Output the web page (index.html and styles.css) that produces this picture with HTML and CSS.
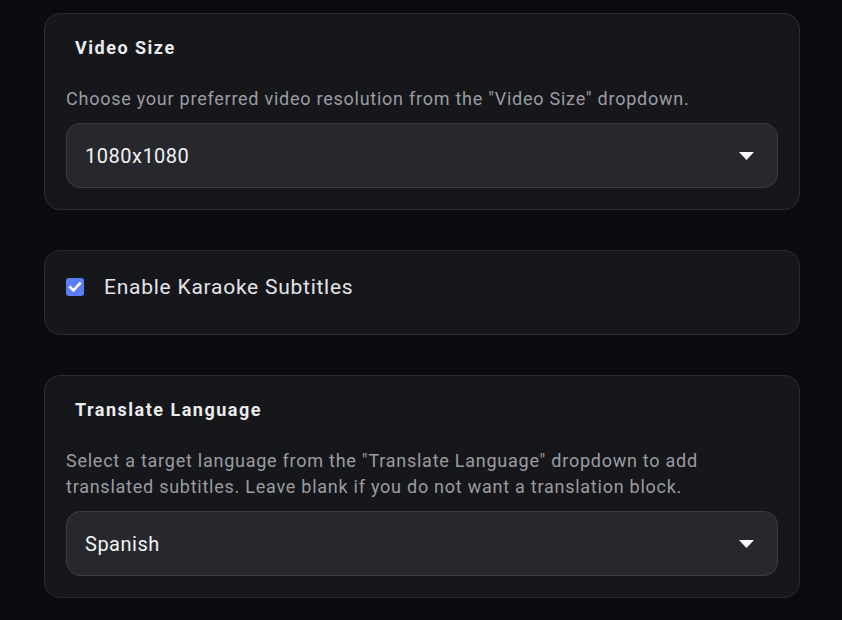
FILE: index.html
```html
<!DOCTYPE html>
<html lang="en">
<head>
<meta charset="utf-8">
<title>Settings</title>
<link rel="stylesheet" href="styles.css">
</head>
<body>
<main class="panel">
  <section class="card">
    <h3 class="card-title">Video Size</h3>
    <p class="card-desc">Choose your preferred video resolution from the "Video Size" dropdown.</p>
    <div class="select">
      <span class="select-value">1080x1080</span>
      <svg class="caret" width="15" height="8" viewBox="0 0 15 8"><path d="M0 0 H15 L7.5 8 Z" fill="#ffffff"/></svg>
    </div>
  </section>

  <section class="card card-check">
    <label class="check-row">
      <span class="checkbox">
        <svg width="18" height="18" viewBox="0 0 18 18"><path d="M4.2 9.3 L7.4 12.4 L13.8 5.6" fill="none" stroke="#ffffff" stroke-width="2.6" stroke-linecap="square"/></svg>
      </span>
      <span class="check-label">Enable Karaoke Subtitles</span>
    </label>
  </section>

  <section class="card">
    <h3 class="card-title">Translate Language</h3>
    <p class="card-desc">Select a target language from the "Translate Language" dropdown to add translated subtitles. Leave blank if you do not want a translation block.</p>
    <div class="select">
      <span class="select-value">Spanish</span>
      <svg class="caret" width="15" height="8" viewBox="0 0 15 8"><path d="M0 0 H15 L7.5 8 Z" fill="#ffffff"/></svg>
    </div>
  </section>
</main>
</body>
</html>
```

FILE: styles.css
```css
html, body {
  margin: 0;
  padding: 0;
  background: #0b0c10;
}

body {
  font-family: Roboto, "Liberation Sans", Arial, sans-serif;
  color: #ececee;
}

.panel {
  display: flex;
  flex-direction: column;
  gap: 40px;
  width: 756px;
  padding: 13px 0 0 44px;
}

.card {
  background: #16171b;
  border: 1px solid #2b2c31;
  border-radius: 16px;
  padding: 22px 21px 21px 21px;
}

.card-title {
  margin: 0 0 0 9px;
  font-size: 18px;
  line-height: 24px;
  font-weight: 700;
  letter-spacing: 1.5px;
  color: #ececee;
}

.card-desc {
  margin: 26px 0 11px 0;
  font-size: 18px;
  line-height: 26px;
  letter-spacing: 0.75px;
  color: #9b9ca2;
}

.select {
  display: flex;
  align-items: center;
  justify-content: space-between;
  height: 63px;
  padding: 0 23px 0 18px;
  background: #27282d;
  border: 1px solid #3b3c42;
  border-radius: 14px;
}

.select-value {
  font-size: 20px;
  letter-spacing: 0.5px;
  color: #f2f2f4;
}

.caret {
  display: block;
}

.card-check {
  padding: 22px 21px 33px 21px;
}

.check-row {
  display: flex;
  align-items: center;
  gap: 20px;
  height: 28px;
}

.checkbox {
  display: flex;
  width: 18px;
  height: 18px;
  border-radius: 3px;
  background: #5b7ef6;
}

.check-label {
  font-size: 21px;
  letter-spacing: 0.75px;
  color: #e4e4e7;
}
```
